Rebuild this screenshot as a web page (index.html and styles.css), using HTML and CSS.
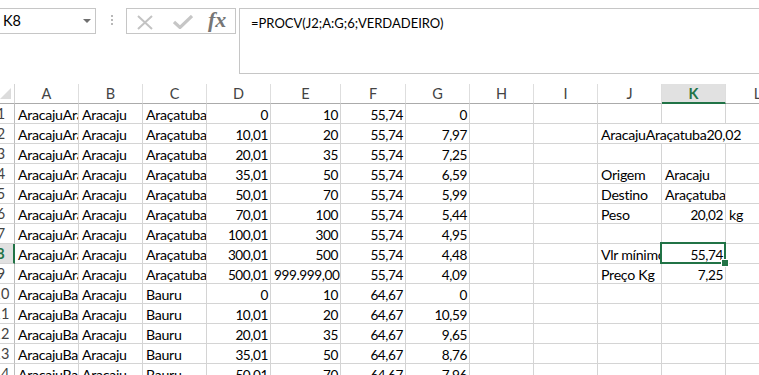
FILE: index.html
```html
<!DOCTYPE html>
<html lang="pt">
<head>
<meta charset="utf-8">
<title>Planilha</title>
<link rel="stylesheet" href="styles.css">
</head>
<body>
<div class="topbar">
  <div class="namebox"><span class="ref">K8</span><span class="caret"></span></div>
  <div class="grip"><i></i><i></i><i></i></div>
  <div class="fxbox">
    <svg class="ico-x" width="18" height="15" viewBox="0 0 18 15"><path d="M2 1 L16 14 M16 1 L2 14" stroke="#c3c3c3" stroke-width="2" fill="none"/></svg>
    <svg class="ico-ok" width="20" height="14" viewBox="0 0 20 14"><path d="M1 7 L7 12.5 L19 1" stroke="#c6c6c6" stroke-width="3.2" fill="none"/></svg>
    <span class="ico-fx">fx</span>
  </div>
  <div class="formula">=PROCV(J2;A:G;6;VERDADEIRO)</div>
</div>
<div class="sheet">
  <div class="corner"><span class="tri"></span></div>
  <div class="ch">A</div><div class="ch">B</div><div class="ch">C</div><div class="ch">D</div><div class="ch">E</div><div class="ch">F</div><div class="ch">G</div><div class="ch">H</div><div class="ch">I</div><div class="ch">J</div><div class="ch ch-sel">K</div><div class="ch">L</div>

  <div class="rh">1</div><div class="c">AracajuAraçatuba</div><div class="c">Aracaju</div><div class="c">Araçatuba</div><div class="c n">0</div><div class="c n">10</div><div class="c n">55,74</div><div class="c n">0</div><div class="c"></div><div class="c"></div><div class="c"></div><div class="c"></div><div class="c"></div>

  <div class="rh">2</div><div class="c">AracajuAraçatuba</div><div class="c">Aracaju</div><div class="c">Araçatuba</div><div class="c n">10,01</div><div class="c n">20</div><div class="c n">55,74</div><div class="c n">7,97</div><div class="c"></div><div class="c"></div><div class="c span3">AracajuAraçatuba20,02</div>

  <div class="rh">3</div><div class="c">AracajuAraçatuba</div><div class="c">Aracaju</div><div class="c">Araçatuba</div><div class="c n">20,01</div><div class="c n">35</div><div class="c n">55,74</div><div class="c n">7,25</div><div class="c"></div><div class="c"></div><div class="c"></div><div class="c"></div><div class="c"></div>

  <div class="rh">4</div><div class="c">AracajuAraçatuba</div><div class="c">Aracaju</div><div class="c">Araçatuba</div><div class="c n">35,01</div><div class="c n">50</div><div class="c n">55,74</div><div class="c n">6,59</div><div class="c"></div><div class="c"></div><div class="c">Origem</div><div class="c">Aracaju</div><div class="c"></div>

  <div class="rh">5</div><div class="c">AracajuAraçatuba</div><div class="c">Aracaju</div><div class="c">Araçatuba</div><div class="c n">50,01</div><div class="c n">70</div><div class="c n">55,74</div><div class="c n">5,99</div><div class="c"></div><div class="c"></div><div class="c">Destino</div><div class="c">Araçatuba</div><div class="c"></div>

  <div class="rh">6</div><div class="c">AracajuAraçatuba</div><div class="c">Aracaju</div><div class="c">Araçatuba</div><div class="c n">70,01</div><div class="c n">100</div><div class="c n">55,74</div><div class="c n">5,44</div><div class="c"></div><div class="c"></div><div class="c">Peso</div><div class="c n">20,02</div><div class="c">kg</div>

  <div class="rh">7</div><div class="c">AracajuAraçatuba</div><div class="c">Aracaju</div><div class="c">Araçatuba</div><div class="c n">100,01</div><div class="c n">300</div><div class="c n">55,74</div><div class="c n">4,95</div><div class="c"></div><div class="c"></div><div class="c"></div><div class="c"></div><div class="c"></div>

  <div class="rh rh-sel">8</div><div class="c">AracajuAraçatuba</div><div class="c">Aracaju</div><div class="c">Araçatuba</div><div class="c n">300,01</div><div class="c n">500</div><div class="c n">55,74</div><div class="c n">4,48</div><div class="c"></div><div class="c"></div><div class="c">Vlr mínimo</div><div class="c n sel">55,74</div><div class="c"></div>

  <div class="rh">9</div><div class="c">AracajuAraçatuba</div><div class="c">Aracaju</div><div class="c">Araçatuba</div><div class="c n">500,01</div><div class="c n">999.999,00</div><div class="c n">55,74</div><div class="c n">4,09</div><div class="c"></div><div class="c"></div><div class="c">Preço Kg</div><div class="c n">7,25</div><div class="c"></div>

  <div class="rh">10</div><div class="c">AracajuBauru</div><div class="c">Aracaju</div><div class="c">Bauru</div><div class="c n">0</div><div class="c n">10</div><div class="c n">64,67</div><div class="c n">0</div><div class="c"></div><div class="c"></div><div class="c"></div><div class="c"></div><div class="c"></div>

  <div class="rh">11</div><div class="c">AracajuBauru</div><div class="c">Aracaju</div><div class="c">Bauru</div><div class="c n">10,01</div><div class="c n">20</div><div class="c n">64,67</div><div class="c n">10,59</div><div class="c"></div><div class="c"></div><div class="c"></div><div class="c"></div><div class="c"></div>

  <div class="rh">12</div><div class="c">AracajuBauru</div><div class="c">Aracaju</div><div class="c">Bauru</div><div class="c n">20,01</div><div class="c n">35</div><div class="c n">64,67</div><div class="c n">9,65</div><div class="c"></div><div class="c"></div><div class="c"></div><div class="c"></div><div class="c"></div>

  <div class="rh">13</div><div class="c">AracajuBauru</div><div class="c">Aracaju</div><div class="c">Bauru</div><div class="c n">35,01</div><div class="c n">50</div><div class="c n">64,67</div><div class="c n">8,76</div><div class="c"></div><div class="c"></div><div class="c"></div><div class="c"></div><div class="c"></div>

  <div class="rh">14</div><div class="c">AracajuBauru</div><div class="c">Aracaju</div><div class="c">Bauru</div><div class="c n">50,01</div><div class="c n">70</div><div class="c n">64,67</div><div class="c n">7,96</div><div class="c"></div><div class="c"></div><div class="c"></div><div class="c"></div><div class="c"></div>
</div>
</body>
</html>
```
FILE: styles.css
```css
* { box-sizing: border-box; }
html, body { margin: 0; padding: 0; }
body {
  width: 759px;
  height: 375px;
  overflow: hidden;
  background: #fff;
  font-family: Lato, "Open Sans", sans-serif;
  font-size: 14.2px;
  color: #000;
}
.topbar {
  display: flex;
  align-items: flex-start;
  height: 84px;
  padding-top: 8px;
}
.namebox {
  position: relative;
  margin-left: -1px;
  width: 97px;
  height: 26px;
  border: 1px solid #c6c6c6;
  line-height: 24px;
  padding-left: 3px;
  font-size: 14.5px;
}
.caret {
  position: absolute;
  left: 83px;
  top: 10px;
  width: 0;
  height: 0;
  border-left: 4px solid transparent;
  border-right: 4px solid transparent;
  border-top: 4px solid #6f6f6f;
}
.grip {
  width: 30px;
  display: flex;
  flex-direction: column;
  align-items: center;
  gap: 2px;
  padding-top: 7px;
  padding-left: 2px;
}
.grip i {
  display: block;
  width: 2px;
  height: 2px;
  background: #b8b8b8;
}
.fxbox {
  width: 110px;
  height: 26px;
  border: 1px solid #c6c6c6;
  display: flex;
  align-items: center;
  padding-left: 9px;
}
.ico-x { margin-top: 2px; }
.ico-ok { margin-left: 19px; margin-top: 1px; }
.ico-fx {
  margin-left: 15px;
  font-family: "Liberation Serif", "DejaVu Serif", serif;
  font-style: italic;
  font-weight: bold;
  font-size: 22px;
  color: #767676;
  line-height: 22px;
  margin-top: -2px;
}
.formula {
  margin-left: 3px;
  flex: 1;
  margin-right: -4px;
  height: 66px;
  border: 1px solid #c6c6c6;
  padding: 5px 0 0 11px;
  line-height: 18px;
  font-size: 13px;
}
.sheet {
  margin-left: -12px;
  display: grid;
  grid-template-columns: 27px 64px 64px 64px 64px 70px 65px 64px 64px 64px 64px 64px 64px;
  grid-auto-rows: 20px;
}
.corner {
  position: relative;
  border-right: 1px solid #d4d4d4;
  border-bottom: 1px solid #ababab;
}
.tri {
  position: absolute;
  right: 3px;
  bottom: 4px;
  width: 0;
  height: 0;
  border-left: 11px solid transparent;
  border-bottom: 11px solid #dcdcdc;
}
.ch {
  border-right: 1px solid #dedede;
  border-bottom: 1px solid #ababab;
  text-align: center;
  color: #444;
  line-height: 19px;
  font-size: 14.5px;
}
.ch-sel {
  background: #e1e1e1;
  border-bottom: 2px solid #217346;
  color: #217346;
  font-weight: bold;
}
.rh {
  border-right: 1px solid #bdbdbd;
  border-bottom: 1px solid #d4d4d4;
  text-align: center;
  color: #444;
  line-height: 20px;
  font-size: 14.5px;
}
.rh-sel {
  background: #e1e1e1;
  border-right: 2px solid #217346;
  color: #217346;
  font-weight: bold;
}
.c {
  border-right: 1px solid #d4d4d4;
  border-bottom: 1px solid #d4d4d4;
  overflow: hidden;
  white-space: nowrap;
  padding: 2px 2px 0 3px;
  line-height: 18px;
  letter-spacing: -0.3px;
}
.n { text-align: right; font-size: 13.6px; letter-spacing: -0.4px; }
.span3 { grid-column: span 3; overflow: visible; }
.sel { position: relative; overflow: visible; }
.sel::before {
  content: "";
  position: absolute;
  left: -2px;
  top: -2px;
  right: -1px;
  bottom: -1px;
  border: 2px solid #217346;
}
.sel::after {
  content: "";
  position: absolute;
  right: -4px;
  bottom: -4px;
  width: 6px;
  height: 6px;
  background: #217346;
  border: 1px solid #fff;
}
```
